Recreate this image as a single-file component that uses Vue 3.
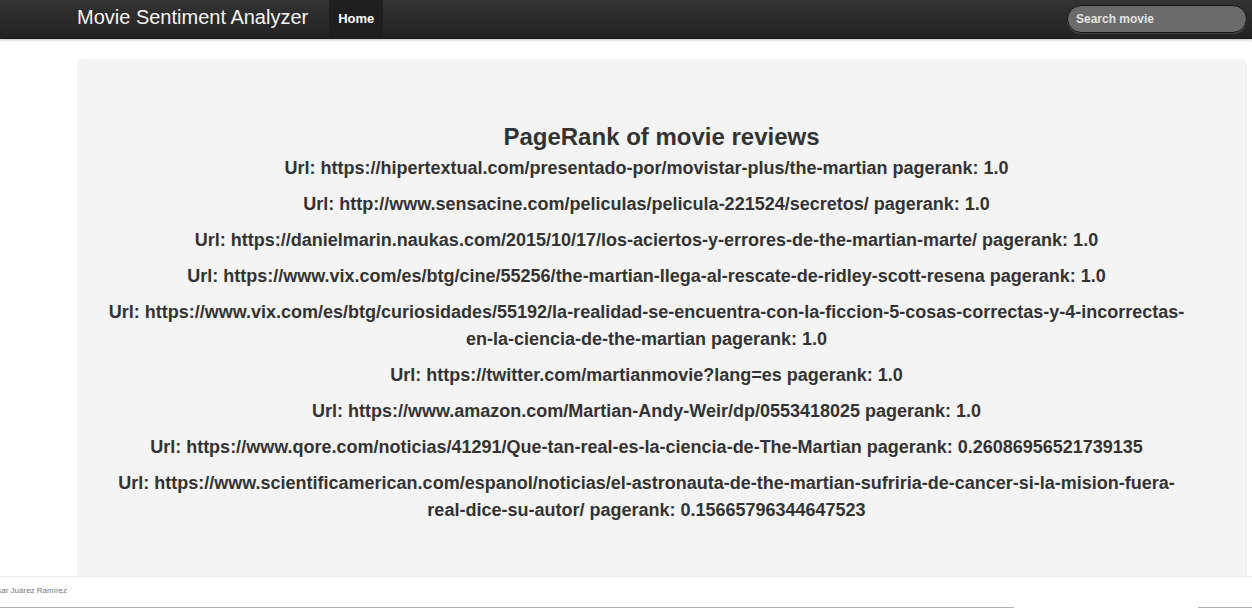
<script setup>
const reviews = [
  { url: 'https://hipertextual.com/presentado-por/movistar-plus/the-martian', rank: '1.0' },
  { url: 'http://www.sensacine.com/peliculas/pelicula-221524/secretos/', rank: '1.0' },
  { url: 'https://danielmarin.naukas.com/2015/10/17/los-aciertos-y-errores-de-the-martian-marte/', rank: '1.0' },
  { url: 'https://www.vix.com/es/btg/cine/55256/the-martian-llega-al-rescate-de-ridley-scott-resena', rank: '1.0' },
  { url: 'https://www.vix.com/es/btg/curiosidades/55192/la-realidad-se-encuentra-con-la-ficcion-5-cosas-correctas-y-4-incorrectas-en-la-ciencia-de-the-martian', rank: '1.0' },
  { url: 'https://twitter.com/martianmovie?lang=es', rank: '1.0' },
  { url: 'https://www.amazon.com/Martian-Andy-Weir/dp/0553418025', rank: '1.0' },
  { url: 'https://www.qore.com/noticias/41291/Que-tan-real-es-la-ciencia-de-The-Martian', rank: '0.26086956521739135' },
  { url: 'https://www.scientificamerican.com/espanol/noticias/el-astronauta-de-the-martian-sufriria-de-cancer-si-la-mision-fuera-real-dice-su-autor/', rank: '0.15665796344647523' },
]
</script>

<template>
  <div class="page">
    <header class="navbar">
      <a class="brand" href="#">Movie Sentiment Analyzer</a>
      <nav><a class="tab" href="#">Home</a></nav>
      <form class="search" @submit.prevent>
        <input type="text" placeholder="Search movie" aria-label="Search movie" />
      </form>
    </header>
    <main class="hero">
      <h2>PageRank of movie reviews</h2>
      <ul>
        <li v-for="r in reviews" :key="r.url">Url: {{ r.url }} pagerank: {{ r.rank }}</li>
      </ul>
    </main>
    <footer class="footer">
      <p>César Juárez Ramírez</p>
      <div class="lines"><span></span><span></span></div>
    </footer>
  </div>
</template>

<style>
body {
  overflow: hidden;
}
</style>

<style scoped>
.page {
  height: 100vh;
  display: flex;
  flex-direction: column;
  background: #fff;
  color: #333;
  font-family: "Liberation Sans", Arial, sans-serif;
}
.navbar {
  flex: none;
  display: flex;
  height: 39px;
  box-sizing: border-box;
  padding: 0 5px 0 77px;
  background: linear-gradient(#333, #222);
  border-bottom: 1px solid #1c1c1c;
  box-shadow: 0 1px 3px rgba(0, 0, 0, 0.25);
}
.brand {
  margin-right: 21px;
  color: #f5f5f5;
  font-size: 20px;
  line-height: 34px;
  text-decoration: none;
}
.tab {
  display: block;
  padding: 0 9px;
  background: #1f1f1f;
  color: #fff;
  font-size: 13px;
  font-weight: bold;
  line-height: 38px;
  text-decoration: none;
}
.search {
  margin: 5px 0 0 auto;
}
.search input {
  display: block;
  box-sizing: border-box;
  width: 180px;
  height: 28px;
  padding: 0 8px;
  border: 1px solid #151515;
  border-radius: 14px;
  background: #6b6b6b;
  box-shadow: inset 0 1px 2px rgba(0, 0, 0, 0.1), 0 1px 0 rgba(255, 255, 255, 0.15);
  color: #fff;
  font: bold 12px "Liberation Sans", Arial, sans-serif;
}
.search input::placeholder {
  color: #e2e2e2;
  opacity: 1;
}
.hero {
  flex: 1;
  min-height: 0;
  overflow: hidden;
  box-sizing: border-box;
  margin: 20px 5px 0 77px;
  padding: 60px 61px 0 30px;
  border-radius: 6px 6px 0 0;
  background: #f4f4f4;
  text-align: center;
}
h2 {
  margin: 0 -30px 0 0;
  font-size: 24px;
  line-height: 36px;
}
ul {
  margin: 0;
  padding: 0;
  list-style: none;
}
li {
  margin-bottom: 9px;
  font-size: 18px;
  font-weight: bold;
  line-height: 27px;
}
.footer {
  flex: none;
  height: 32px;
  box-sizing: border-box;
  display: flex;
  flex-direction: column;
  justify-content: space-between;
  border-top: 1px solid #ebebeb;
}
.footer p {
  margin: 8px 0 0 -13px;
  color: #777;
  font-size: 8px;
  line-height: 12px;
}
.lines {
  display: flex;
  justify-content: space-between;
}
.lines span {
  width: 81%;
  height: 1px;
  background: #b0b0b0;
}
.lines span:last-child {
  width: 54px;
}
</style>
